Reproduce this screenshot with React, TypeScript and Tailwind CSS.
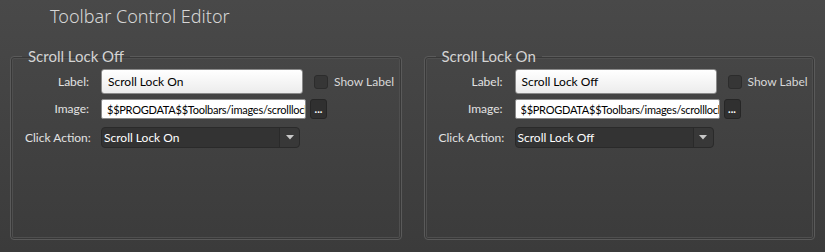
const PATH = '$$PROGDATA$$Toolbars/images/scrolllock.png';

function Group({ title, label, action }: { title: string; label: string; action: string }) {
  return (
    <fieldset className="w-[392px] h-[194px] rounded-[4px] border border-[#5a5a5a] shadow-[inset_0_0_0_1px_#383838,inset_0_0_0_2px_#4f4f4f]">
      <legend className="ml-[11px] px-[6px] h-[20px] leading-[20px] text-[15px] text-[#d4d4d4]">{title}</legend>

      <div className="pt-[3px] text-[12px] whitespace-nowrap">
        <div className="flex items-center h-[25px]">
          <div className="w-[78px] text-right text-[#e2e2e2]">Label:</div>
          <div className="ml-[12px] w-[202px] h-[25px] rounded-[3px] border border-[#8a8a8a] bg-gradient-to-b from-white to-[#ececec] px-[6px] flex items-center text-black">
            {label}
          </div>
          <div className="ml-[11px] w-[14px] h-[14px] rounded-[3px] border border-[#2c2c2c] bg-[#363636]" />
          <span className="ml-[6px] text-[#d8d8d8]">Show Label</span>
        </div>

        <div className="flex items-center h-[20px] mt-[5px]">
          <div className="w-[78px] text-right text-[#e2e2e2]">Image:</div>
          <input
            readOnly
            value={PATH}
            className="ml-[12px] w-[205px] h-[20px] rounded-[2px] border border-[#8a8a8a] bg-white pl-[5px] pr-0 text-[11px] tracking-[-0.25px] text-black outline-none"
          />
          <div className="ml-[4px] w-[17px] h-[20px] rounded-[3px] border border-[#262626] bg-[#303030] flex items-end justify-center pb-[4px] text-[11px] leading-none font-bold text-white">
            ...
          </div>
        </div>

        <div className="flex items-center h-[21px] mt-[8px]">
          <div className="w-[78px] pl-[14px] text-[#e2e2e2]">Click Action:</div>
          <div className="ml-[12px] w-[199px] h-[21px] rounded-[4px] border border-[#2a2a2a] bg-[#333333] flex items-center text-white">
            <span className="flex-1 pl-[2px]">{action}</span>
            <div className="w-[20px] h-full border-l border-[#2a2a2a] bg-[#383838] rounded-r-[4px] flex items-center justify-center">
              <svg width="8" height="5" viewBox="0 0 8 5">
                <path d="M0 0 L8 0 L4 4.5 Z" fill="#c8c8c8" />
              </svg>
            </div>
          </div>
        </div>
      </div>
    </fieldset>
  );
}

export default function App() {
  return (
    <div className="w-[825px] h-[252px] overflow-hidden bg-gradient-to-b from-[#494949] to-[#3b3b3b] font-['Lato',sans-serif]">
      <h1 className="h-[46px] pl-[50px] pt-[4px] font-['Noto_Sans',sans-serif] text-[18px] leading-[24px] font-light text-[#d6d6d6]">
        Toolbar Control Editor
      </h1>
      <div className="flex gap-[22px] px-[10px]">
        <Group title="Scroll Lock Off" label="Scroll Lock On" action="Scroll Lock On" />
        <Group title="Scroll Lock On" label="Scroll Lock Off" action="Scroll Lock Off" />
      </div>
    </div>
  );
}
